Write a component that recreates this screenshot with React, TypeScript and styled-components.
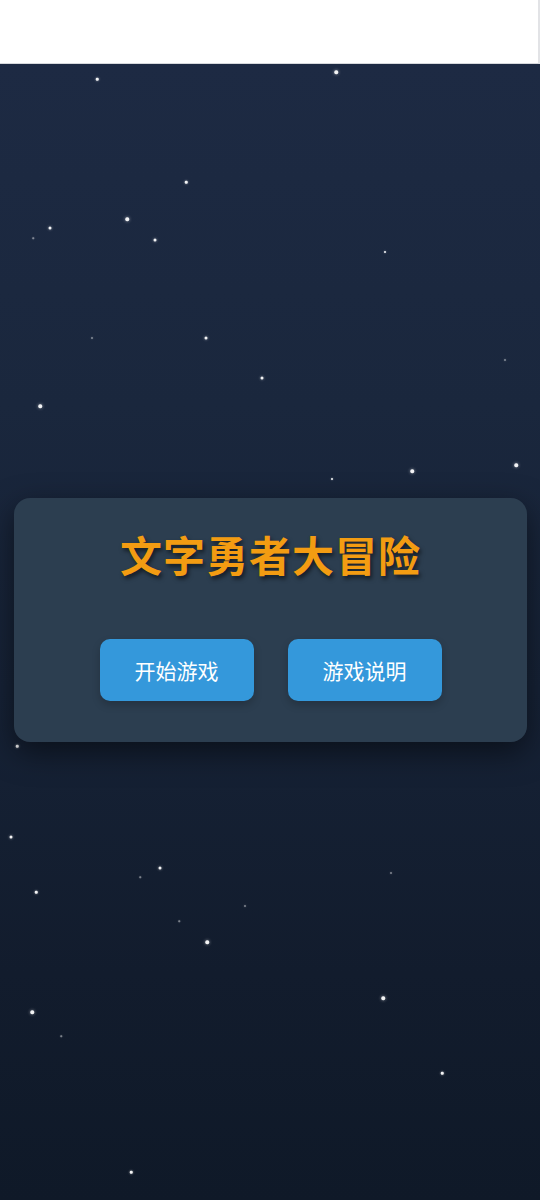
import React from "react";
import styled, { createGlobalStyle } from "styled-components";

const GlobalStyle = createGlobalStyle`
  html, body {
    margin: 0;
    padding: 0;
    background: #ffffff;
  }
  body {
    font-family: "Noto Sans CJK SC", "Noto Sans", sans-serif;
  }
  * { box-sizing: border-box; }
`;

const Page = styled.div`
  width: 540px;
  min-height: 1200px;
  display: flex;
  flex-direction: column;
`;

const TopBar = styled.div`
  height: 64px;
  background: #ffffff;
  border-bottom: 1px solid #d6d8dc;
  border-right: 2px solid #e2e3e6;
`;

const Sky = styled.main`
  position: relative;
  flex: 1;
  height: 1136px;
  overflow: hidden;
  background: linear-gradient(180deg, #1d2a43 0%, #1a273d 30%, #162236 55%, #121c2d 80%, #0f1928 100%);
  display: flex;
  flex-direction: column;
  align-items: center;
`;

const Star = styled.span<{ $size: number; $dim?: boolean }>`
  position: absolute;
  width: ${(p) => p.$size}px;
  height: ${(p) => p.$size}px;
  border-radius: 50%;
  background: #ffffff;
  opacity: ${(p) => (p.$dim ? 0.45 : 0.95)};
  box-shadow: 0 0 ${(p) => p.$size}px rgba(255, 255, 255, 0.6);
  transform: translate(-50%, -50%);
`;

const Card = styled.section`
  position: relative;
  z-index: 1;
  margin-top: 434px;
  width: 513px;
  margin-left: 1px;
  padding: 31px 20px 41px;
  background: #2c3e50;
  border-radius: 16px;
  box-shadow: 0 10px 30px rgba(0, 0, 0, 0.5);
  display: flex;
  flex-direction: column;
  align-items: center;
`;

const Title = styled.h1`
  margin: 0;
  font-family: "Noto Sans CJK SC", "Noto Sans", sans-serif;
  font-size: 42px;
  line-height: 50px;
  font-weight: 700;
  color: #f39c12;
  text-shadow: 2px 3px 4px rgba(0, 0, 0, 0.55);
  letter-spacing: 1px;
`;

const ButtonRow = styled.div`
  margin-top: 60px;
  display: flex;
  gap: 34px;
`;

const MenuButton = styled.button`
  width: 154px;
  height: 62px;
  border: none;
  border-radius: 10px;
  background: #3498db;
  color: #ffffff;
  font-family: "Noto Sans CJK SC", "Noto Sans", sans-serif;
  font-size: 21px;
  font-weight: 400;
  box-shadow: 0 4px 8px rgba(0, 0, 0, 0.2);
  cursor: pointer;
`;

type S = [number, number, number, boolean?];
const stars: S[] = [
  [97, 79, 2.5],
  [336, 72, 3.5],
  [186, 182, 2.5],
  [127, 219, 3.5],
  [50, 228, 3],
  [33, 238, 1.5, true],
  [155, 240, 3],
  [385, 252, 2],
  [92, 338, 2, true],
  [206, 338, 3],
  [262, 378, 3],
  [505, 360, 2, true],
  [40, 406, 3.5],
  [412, 471, 3.5],
  [516, 465, 3.5],
  [332, 479, 2],
  [17, 746, 2.5],
  [11, 837, 3],
  [140, 877, 1.5, true],
  [160, 868, 3],
  [36, 892, 2.5],
  [391, 873, 2, true],
  [245, 906, 2, true],
  [179, 921, 1.5, true],
  [207, 942, 3.5],
  [383, 998, 3.5],
  [32, 1012, 3.5],
  [61, 1036, 1.5, true],
  [442, 1073, 2.5],
  [131, 1172, 2.5],
];

export default function App() {
  return (
    <>
      <GlobalStyle />
      <Page>
        <TopBar />
        <Sky>
          {stars.map(([x, y, s, dim], i) => (
            <Star key={i} $size={s} $dim={dim} style={{ left: x, top: y - 64 }} />
          ))}
          <Card>
            <Title>文字勇者大冒险</Title>
            <ButtonRow>
              <MenuButton>开始游戏</MenuButton>
              <MenuButton>游戏说明</MenuButton>
            </ButtonRow>
          </Card>
        </Sky>
      </Page>
    </>
  );
}
